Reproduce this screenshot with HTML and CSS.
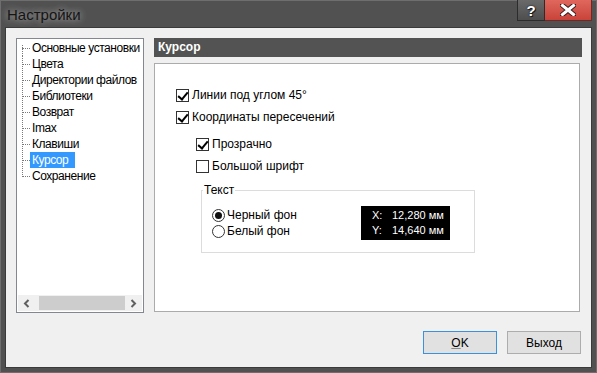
FILE: index.html
```html
<!DOCTYPE html>
<html>

<head>
    <title>Настройки</title>
    <link rel="stylesheet" href="styles.css">
</head>

<body>
    <div class="window">
        <div class="titlebar">
            <span class="title">Настройки</span>
            <div class="caption-buttons">
                <span class="btn-help">?</span>
                <span class="btn-close">
                    <svg width="16" height="12" viewBox="0 0 16 12">
                        <path d="M2 1 L14 11 M14 1 L2 11" stroke="#3a1a18" stroke-width="5" stroke-linecap="square" />
                        <path d="M2.5 1.5 L13.5 10.5 M13.5 1.5 L2.5 10.5" stroke="#fff" stroke-width="3" stroke-linecap="square" />
                    </svg>
                </span>
            </div>
        </div>
        <div class="client">
            <div class="main">
                <div class="tree">
                    <ul class="tree-list">
                        <li><span>Основные установки</span></li>
                        <li><span>Цвета</span></li>
                        <li><span>Директории файлов</span></li>
                        <li><span>Библиотеки</span></li>
                        <li><span>Возврат</span></li>
                        <li><span>Imax</span></li>
                        <li><span>Клавиши</span></li>
                        <li class="selected"><span>Курсор</span></li>
                        <li><span>Сохранение</span></li>
                    </ul>
                    <div class="hscroll">
                        <span class="arrow">
                            <svg width="7" height="9" viewBox="0 0 7 9"><path d="M5.5 1 L2 4.5 L5.5 8" fill="none" stroke="#606060" stroke-width="2" /></svg>
                        </span>
                        <div class="track"><div class="thumb"></div></div>
                        <span class="arrow">
                            <svg width="7" height="9" viewBox="0 0 7 9"><path d="M1.5 1 L5 4.5 L1.5 8" fill="none" stroke="#606060" stroke-width="2" /></svg>
                        </span>
                    </div>
                </div>
                <div class="page">
                    <div class="page-header">Курсор</div>
                    <div class="page-body">
                        <label class="check"><span class="box checked"></span>Линии под углом 45°</label>
                        <label class="check"><span class="box checked"></span>Координаты пересечений</label>
                        <label class="check sub first-sub"><span class="box checked"></span>Прозрачно</label>
                        <label class="check sub"><span class="box"></span>Большой шрифт</label>
                        <fieldset class="group">
                            <legend>Текст</legend>
                            <div class="group-row">
                                <div class="radios">
                                    <label class="radio"><span class="dot on"></span>Черный фон</label>
                                    <label class="radio"><span class="dot"></span>Белый фон</label>
                                </div>
                                <div class="preview">
                                    <div><span class="axis">X:</span>12,280 мм</div>
                                    <div><span class="axis">Y:</span>14,640 мм</div>
                                </div>
                            </div>
                        </fieldset>
                    </div>
                </div>
            </div>
            <div class="footer">
                <button type="button" class="btn btn-default"><u>O</u>K</button>
                <button type="button" class="btn">Выход</button>
            </div>
        </div>
    </div>
</body>

</html>
```

FILE: styles.css
```css
/* General */
* {
    box-sizing: border-box;
}

html,
body {
    margin: 0;
    height: 100%;
    background: #505050;
}

body {
    font-family: "Liberation Sans", Arial, sans-serif;
    font-size: 12px;
    color: #000;
}

/* Window frame */
.window {
    width: 597px;
    height: 373px;
    display: flex;
    flex-direction: column;
    background: #515151;
    border: 1px solid #6e6e6e;
}

.titlebar {
    height: 26px;
    display: flex;
    align-items: flex-start;
    justify-content: space-between;
}

.title {
    margin: 5px 0 0 6px;
    font-size: 15px;
    color: #151515;
    text-shadow: 0 0 6px rgba(255, 255, 255, 0.45), 0 0 10px rgba(255, 255, 255, 0.3);
}

.caption-buttons {
    display: flex;
    margin-right: 4px;
    margin-top: -1px;
}

.btn-help,
.btn-close {
    height: 21px;
    display: flex;
    align-items: center;
    justify-content: center;
    border: 1px solid #2c2c2c;
    border-top: 0;
}

.btn-help {
    width: 28px;
    background: linear-gradient(#6a6a6a, #4e4e4e);
    color: #fff;
    font-weight: bold;
    font-size: 15px;
    text-shadow: 0 0 2px #000, 1px 1px 0 #222;
}

.btn-close {
    width: 47px;
    border-left: 0;
    background: linear-gradient(#e0675d, #c9433a);
    border-color: #6d2a24;
}

/* Client area */
.client {
    flex: 1;
    display: flex;
    flex-direction: column;
    margin: 0 4px 4px 4px;
    background: #f0f0f0;
    border: 1px solid #3a3a3a;
}

.main {
    display: flex;
    padding: 10px 0 0 10px;
}

/* Tree */
.tree {
    width: 128px;
    height: 275px;
    background: #fff;
    border: 1px solid #828790;
    display: flex;
    flex-direction: column;
    overflow: hidden;
}

.tree-list {
    flex: 1;
    list-style: none;
    margin: 0;
    padding: 1px 0 0 5px;
}

.tree-list li {
    height: 16px;
    display: flex;
    align-items: center;
    white-space: nowrap;
    letter-spacing: -0.45px;
    background: repeating-linear-gradient(to bottom, #7a7a7a 0 1px, transparent 1px 2px) no-repeat 0 0 / 1px 100%;
}

.tree-list li:first-child {
    background-position: 0 5px;
}

.tree-list li:last-child {
    background-size: 1px 9px;
}

.tree-list li::before {
    content: "";
    width: 8px;
    flex: none;
    border-top: 1px dotted #7a7a7a;
}

.tree-list li span {
    padding: 0 2px;
    line-height: 16px;
}

.tree-list li.selected span {
    background: #3399ff;
    color: #fff;
    padding-right: 7px;
}

.hscroll {
    height: 16px;
    margin: 0 1px 1px;
    display: flex;
    background: #f0f0f0;
}

.hscroll .arrow {
    width: 17px;
    flex: none;
    display: flex;
    align-items: center;
    justify-content: center;
}

.hscroll .track {
    flex: 1;
    padding: 1px 0;
}

.hscroll .thumb {
    width: 86px;
    height: 100%;
    margin-left: 4px;
    background: #cdcdcd;
}

/* Page */
.page {
    margin-left: 10px;
    width: 428px;
}

.page-header {
    height: 19px;
    background: #535353;
    color: #fff;
    font-weight: bold;
    line-height: 19px;
    padding-left: 4px;
}

.page-body {
    width: 426px;
    height: 249px;
    margin-top: 6px;
    background: #fff;
    border: 1px solid #ababab;
    padding: 20px 0 0 21px;
}

.check,
.radio {
    display: flex;
    align-items: center;
    white-space: nowrap;
}

.check {
    height: 22px;
}

.check.sub {
    margin-left: 20px;
}

.check.first-sub {
    margin-top: 5px;
}

.box {
    width: 13px;
    height: 13px;
    margin-right: 3px;
    border: 1px solid #333;
    background: #fff;
    position: relative;
}

.box.checked::after {
    content: "";
    position: absolute;
    left: 3px;
    top: 0px;
    width: 4px;
    height: 8px;
    border: solid #000;
    border-width: 0 2px 2px 0;
    transform: rotate(40deg);
}

/* Group box */
.group {
    width: 274px;
    margin: 6px 0 0 25px;
    padding: 9px 0 12px 10px;
    border: 1px solid #dcdcdc;
}

.group legend {
    margin-left: -9px;
    padding: 0 1px;
}

.group-row {
    display: flex;
    align-items: center;
}

.radios {
    width: 149px;
}

.radio {
    height: 16px;
}

.dot {
    width: 13px;
    height: 13px;
    margin-right: 2px;
    border: 1px solid #333;
    border-radius: 50%;
    background: #fff;
    display: flex;
    align-items: center;
    justify-content: center;
}

.dot.on::after {
    content: "";
    width: 7px;
    height: 7px;
    border-radius: 50%;
    background: #111;
}

.preview {
    width: 89px;
    height: 34px;
    background: #000;
    color: #fff;
    font-size: 11px;
    line-height: 15px;
    padding: 2px 0 0 11px;
}

.axis {
    display: inline-block;
    width: 20px;
}

/* Footer buttons */
.footer {
    margin-top: auto;
    display: flex;
    justify-content: flex-end;
    gap: 10px;
    padding: 0 10px 13px 0;
}

.btn {
    width: 74px;
    height: 23px;
    font-family: "Liberation Sans", Arial, sans-serif;
    font-size: 12px;
    color: #000;
    background: #e1e1e1;
    border: 1px solid #adadad;
    padding: 0;
}

.btn-default {
    border-color: #3c90e0;
}

.btn u {
    text-decoration-color: #888;
}
```
